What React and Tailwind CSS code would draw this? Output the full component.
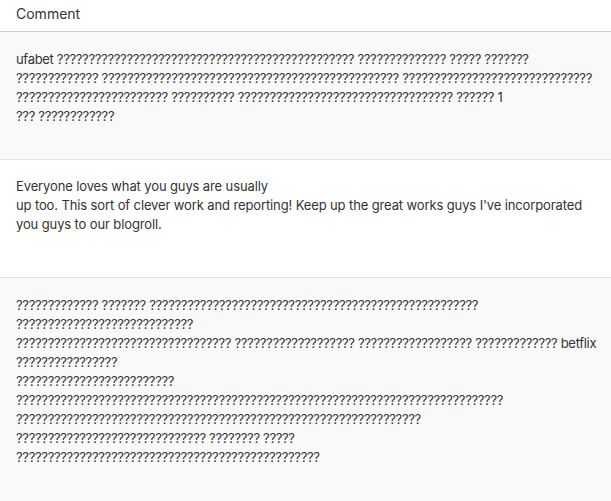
import React from "react";

const q = (n) => "?".repeat(n);

const row1 = [
  `ufabet ${q(47)} ${q(14)} ${q(5)} ${q(7)}`,
  `${q(13)} ${q(47)} ${q(30)}`,
  `${q(24)} ${q(10)} ${q(34)} ${q(6)} 1`,
  `${q(3)} ${q(12)}`,
];

const row2 = [
  "Everyone loves what you guys are usually",
  "up too. This sort of clever work and reporting! Keep up the great works guys I've incorporated",
  "you guys to our blogroll.",
];

const row3 = [
  `${q(13)} ${q(7)} ${q(52)}`,
  `${q(28)}`,
  `${q(34)} ${q(19)} ${q(18)} ${q(13)} betflix`,
  `${q(16)}`,
  `${q(25)}`,
  `${q(77)}`,
  `${q(64)}`,
  `${q(30)} ${q(8)} ${q(5)}`,
  `${q(48)}`,
];

function Lines({ lines, tight }) {
  return (
    <div className={tight ? "flex flex-col tracking-[-0.32px]" : "flex flex-col tracking-[-0.12px]"}>
      {lines.map((l, i) => (
        <div key={i} className="h-[19px] leading-[19px] whitespace-nowrap">
          {l}
        </div>
      ))}
    </div>
  );
}

export default function App() {
  return (
    <div
      className="w-[611px] h-[501px] overflow-hidden bg-white text-[#333333] text-[13px]"
      style={{ fontFamily: "Inter, 'Liberation Sans', sans-serif" }}
    >
      <div className="h-[32px] border-b border-[#cfcfcf] px-4 flex items-center text-[14px] pb-[4px]">
        Comment
      </div>
      <div className="bg-[#f9f9f9] h-[128px] px-4 pt-[18px] border-b border-[#e2e2e2]">
        <Lines lines={row1} tight />
      </div>
      <div className="bg-white h-[118px] px-4 pt-[17px] border-b border-[#e2e2e2]">
        <Lines lines={row2} />
      </div>
      <div className="bg-[#f9f9f9] h-[223px] px-4 pt-[18px]">
        <Lines lines={row3} tight />
      </div>
    </div>
  );
}
